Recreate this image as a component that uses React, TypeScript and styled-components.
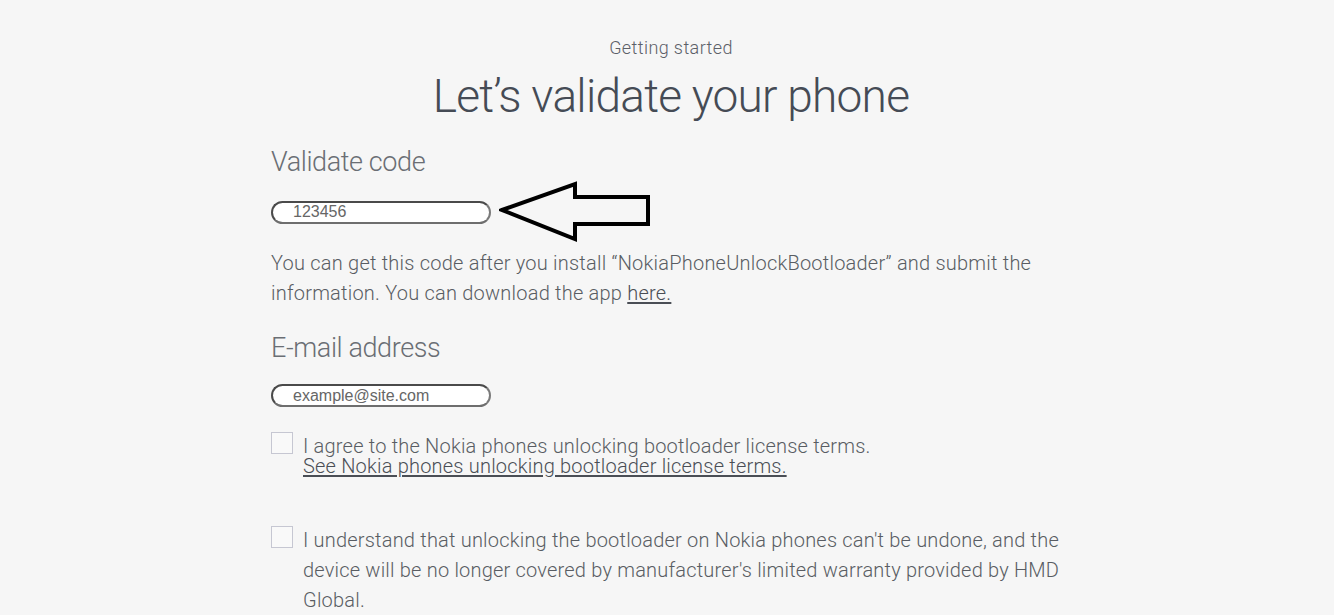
import React, { useState } from "react";
import styled, { createGlobalStyle } from "styled-components";

const GlobalStyle = createGlobalStyle`
  html, body {
    margin: 0;
    padding: 0;
    background: #f6f6f6;
  }
  body {
    font-family: Roboto, "Open Sans", sans-serif;
    font-weight: 300;
    color: #555a60;
  }
`;

const Page = styled.div`
  min-height: 615px;
  padding: 0 0 0 8px;
  background: #f6f6f6;
  overflow: hidden;
`;

const Container = styled.div`
  width: 800px;
  margin: 0 auto;
`;

const Eyebrow = styled.p`
  margin: 0;
  padding-top: 37px;
  text-align: center;
  font-size: 18px;
  line-height: 22px;
  letter-spacing: 0.4px;
  color: #5c6068;
`;

const Title = styled.h1`
  margin: 9px 0 0;
  text-align: center;
  font-size: 46px;
  line-height: 56px;
  font-weight: 300;
  letter-spacing: -0.75px;
  color: #454b55;
`;

const SectionLabel = styled.h2`
  margin: 0;
  font-size: 27px;
  line-height: 36px;
  font-weight: 300;
  letter-spacing: -0.4px;
  color: #6a6e74;
`;

const FieldRow = styled.div`
  display: flex;
  align-items: center;
  gap: 8px;
`;

const PillInput = styled.input`
  box-sizing: border-box;
  width: 220px;
  height: 23px;
  padding: 0 0 0 20px;
  border: 2px solid #4a4a4a;
  border-right-color: #7a7a7a;
  border-bottom-color: #6e6e6e;
  border-radius: 12px;
  background: #ffffff;
  font-family: "Liberation Sans", Arial, sans-serif;
  font-size: 16px;
  color: #666;
  outline: none;
  &::placeholder {
    color: #666;
  }
`;

const Paragraph = styled.p`
  margin: 0;
  font-size: 20px;
  line-height: 30px;
  letter-spacing: 0.22px;
  color: #595d63;
`;

const Link = styled.a`
  color: #4a4e55;
  text-decoration: underline;
  text-underline-offset: 2px;
  cursor: pointer;
`;

const CheckRow = styled.label`
  display: flex;
  align-items: flex-start;
  gap: 10px;
  cursor: pointer;
`;

const Box = styled.span<{ $checked: boolean }>`
  box-sizing: border-box;
  flex: 0 0 22px;
  width: 22px;
  height: 22px;
  border: 1px solid #c6c7d2;
  background: ${(p) => (p.$checked ? "#dfe3ee" : "#f9f9f9")};
`;

const CheckText = styled.span<{ $tight?: boolean }>`
  font-size: 20px;
  line-height: ${(p) => (p.$tight ? "20px" : "30px")};
  letter-spacing: 0.2px;
  color: #595d63;
  margin-top: ${(p) => (p.$tight ? "4px" : "-1px")};
`;

const Spacer = styled.div<{ $h: number }>`
  height: ${(p) => p.$h}px;
`;

function Arrow() {
  return (
    <svg width="154" height="62" viewBox="0 0 154 62">
      <polygon
        points="3,29 76,3 76,16 149,16 149,43 76,43 76,58"
        fill="none"
        stroke="#000"
        strokeWidth="4"
        strokeLinejoin="miter"
      />
    </svg>
  );
}

function App() {
  const [code, setCode] = useState("");
  const [email, setEmail] = useState("");
  const [agree, setAgree] = useState(false);
  const [understand, setUnderstand] = useState(false);

  return (
    <Page>
      <GlobalStyle />
      <Container>
        <Eyebrow>Getting started</Eyebrow>
        <Title>Let’s validate your phone</Title>
        <Spacer $h={20} />
        <SectionLabel>Validate code</SectionLabel>
        <Spacer $h={1} />
        <FieldRow>
          <PillInput
            placeholder="123456"
            value={code}
            onChange={(e: React.ChangeEvent<HTMLInputElement>) => setCode(e.target.value)}
          />
          <Arrow />
        </FieldRow>
        <Spacer $h={5} />
        <Paragraph>
          You can get this code after you install “NokiaPhoneUnlockBootloader” and submit the
          information. You can download the app <Link>here.</Link>
        </Paragraph>
        <Spacer $h={22} />
        <SectionLabel>E-mail address</SectionLabel>
        <Spacer $h={18} />
        <FieldRow>
          <PillInput
            placeholder="example@site.com"
            value={email}
            onChange={(e: React.ChangeEvent<HTMLInputElement>) => setEmail(e.target.value)}
          />
        </FieldRow>
        <Spacer $h={25} />
        <CheckRow onClick={() => setAgree(!agree)}>
          <Box $checked={agree} />
          <CheckText $tight>
            I agree to the Nokia phones unlocking bootloader license terms.
            <br />
            <Link>See Nokia phones unlocking bootloader license terms.</Link>
          </CheckText>
        </CheckRow>
        <Spacer $h={50} />
        <CheckRow onClick={() => setUnderstand(!understand)}>
          <Box $checked={understand} />
          <CheckText>
            I understand that unlocking the bootloader on Nokia phones can't be undone, and the
            device will be no longer covered by manufacturer's limited warranty provided by HMD
            Global.
          </CheckText>
        </CheckRow>
      </Container>
    </Page>
  );
}

export default App;
